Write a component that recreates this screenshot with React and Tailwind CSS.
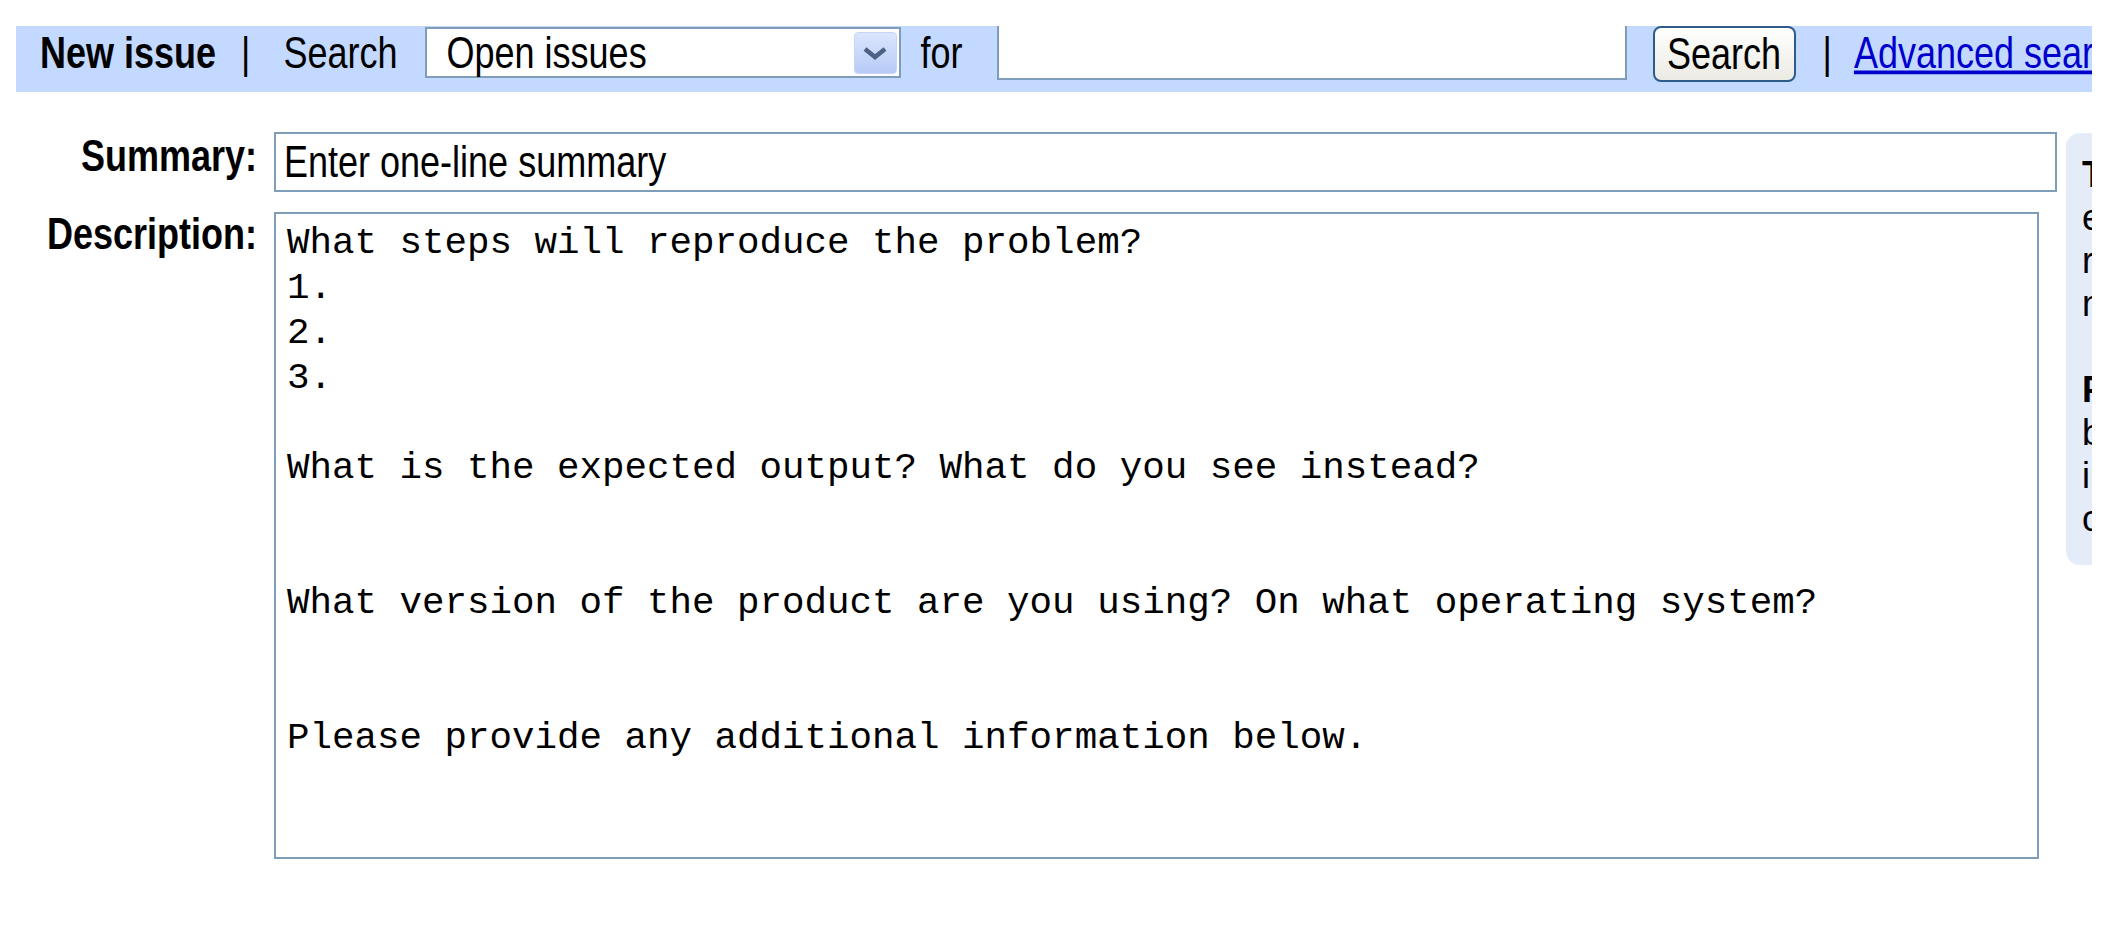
import { useState } from 'react';

const descTemplate = `What steps will reproduce the problem?
1.
2.
3.

What is the expected output? What do you see instead?


What version of the product are you using? On what operating system?


Please provide any additional information below.
`;

function Txt({ children, className = '' }) {
  // old screenshot text is taller than Arial at the same width
  return <span className={`inline-block scale-y-125 ${className}`}>{children}</span>;
}

export default function App() {
  const [summary, setSummary] = useState('Enter one-line summary');
  const [desc, setDesc] = useState(descTemplate);
  const [query, setQuery] = useState('');

  return (
    <div className="min-h-screen bg-white text-black font-['Liberation_Sans',Arial,sans-serif] text-[36px]">
      <div className="w-[2092px] overflow-hidden pt-[26px]">
        {/* Search bar */}
        <div className="ml-[16px] h-[66px] bg-[#c3d9ff] flex items-start whitespace-nowrap">
          <div className="shrink-0 ml-[24px] mt-[1px] h-[51px] flex items-center font-bold">
            <Txt>New issue</Txt>
          </div>
          <div className="shrink-0 ml-[25px] mt-[1px] h-[51px] flex items-center">
            <Txt>|</Txt>
          </div>
          <div className="shrink-0 ml-[33px] mt-[1px] h-[51px] flex items-center">
            <Txt>Search</Txt>
          </div>
          <div className="shrink-0 ml-[27px] mt-[1px] w-[476px] h-[51px] bg-white border-2 border-[#7f9db9] flex items-center">
            <Txt className="ml-[20px] flex-1">Open issues</Txt>
            <div className="mr-[2px] w-[43px] h-[42px] rounded-[4px] border border-[#c6d5f7] bg-gradient-to-b from-[#dbe6fe] to-[#b7cbf6] flex items-center justify-center">
              <svg width="26" height="14" viewBox="0 0 26 14">
                <path d="M3 3 L13 11 L23 3" fill="none" stroke="#4d6185" strokeWidth="4.5" />
              </svg>
            </div>
          </div>
          <div className="shrink-0 ml-[20px] mt-[1px] h-[51px] flex items-center">
            <Txt>for</Txt>
          </div>
          <input
            value={query}
            onChange={e => setQuery(e.target.value)}
            className="shrink-0 ml-[34px] w-[630px] h-[54px] bg-white border-2 border-t-0 border-[#7f9db9] outline-none px-2 text-[36px]"
          />
          <button
            type="button"
            className="shrink-0 ml-[26px] w-[143px] h-[56px] rounded-[8px] border-2 border-[#2d5b8c] bg-gradient-to-b from-white to-[#ebeae3] flex items-center justify-center"
          >
            <Txt>Search</Txt>
          </button>
          <div className="shrink-0 ml-[27px] mt-[1px] h-[51px] flex items-center">
            <Txt>|</Txt>
          </div>
          <div className="shrink-0 ml-[22px] mt-[1px] h-[51px] flex items-center">
            <Txt className="text-[#0000cc] underline">Advanced search</Txt>
          </div>
        </div>

        {/* Form + tips */}
        <div className="mt-[40px] flex items-start">
          <div className="shrink-0 grid grid-cols-[257px_auto] gap-x-[17px] gap-y-[20px] items-start">
            <div className="text-right font-bold leading-[47px]">
              <Txt>Summary:</Txt>
            </div>
            <div className="w-[1783px] h-[60px] bg-white border-2 border-[#7f9db9] flex items-center">
              <input
                value={summary}
                onChange={e => setSummary(e.target.value)}
                className="w-full h-[42px] pl-[8px] bg-transparent outline-none scale-y-125 text-[36px]"
              />
            </div>
            <div className="text-right font-bold leading-[47px] -mt-[2px]">
              <Txt>Description:</Txt>
            </div>
            <textarea
              value={desc}
              onChange={e => setDesc(e.target.value)}
              className="w-[1765px] h-[647px] resize-none bg-white border-2 border-[#7f9db9] outline-none pt-[7px] pl-[11px] font-['Liberation_Mono','Courier_New',monospace] text-[37.5px] leading-[45px]"
            />
          </div>

          <div className="shrink-0 ml-[9px] mt-[1px] w-[320px] h-[432px] rounded-l-[14px] bg-[#e5ecf9] pt-[20px] pl-[16px] leading-[43px] whitespace-nowrap">
            <div className="font-bold">Tips</div>
            <div>enter one problem per</div>
            <div>report, and a</div>
            <div>meaningful summary.</div>
            <div>&nbsp;</div>
            <div className="font-bold">Please</div>
            <div>be specific and</div>
            <div>include the steps</div>
            <div>on how to reproduce.</div>
          </div>
        </div>
      </div>
    </div>
  );
}
